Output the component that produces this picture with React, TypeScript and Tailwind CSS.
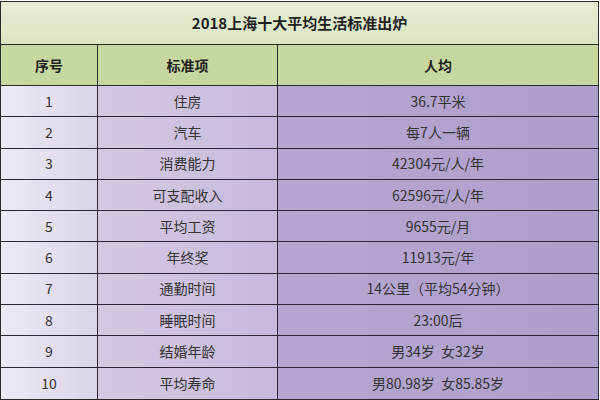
const rows: [string, string, string][] = [
  ['1', '住房', '36.7平米'],
  ['2', '汽车', '每7人一辆'],
  ['3', '消费能力', '42304元/人/年'],
  ['4', '可支配收入', '62596元/人/年'],
  ['5', '平均工资', '9655元/月'],
  ['6', '年终奖', '11913元/年'],
  ['7', '通勤时间', '14公里（平均54分钟）'],
  ['8', '睡眠时间', '23:00后'],
  ['9', '结婚年龄', '男34岁  女32岁'],
  ['10', '平均寿命', '男80.98岁  女85.85岁'],
];

export default function App() {
  return (
    <div className="w-[600px] h-[400px] bg-white pt-px font-['Noto_Sans_CJK_SC','Noto_Sans',sans-serif]">
      <div className="w-[599px] border border-[#2a2a2a] flex flex-col">
        <div className="h-[43px] flex items-center justify-center border-b border-[#2a2a2a] bg-linear-to-b from-[#e6edd4] to-[#dbe5c2] text-[15px] font-bold text-[#1f1f1f]">
          2018上海十大平均生活标准出炉
        </div>
        <div className="h-[41px] grid grid-cols-[97px_180px_1fr] border-b border-[#2a2a2a] bg-[#c6d89f] text-[14px] font-bold text-[#222]">
          <div className="flex items-center justify-center border-r border-[#2a2a2a]">序号</div>
          <div className="flex items-center justify-center border-r border-[#2a2a2a]">标准项</div>
          <div className="flex items-center justify-center">人均</div>
        </div>
        {rows.map(([n, item, value], i) => (
          <div
            key={n}
            className={`h-[31.3px] grid grid-cols-[97px_180px_1fr] text-[14px] text-[#333] ${i < rows.length - 1 ? 'border-b border-[#2b2638]' : ''}`}
          >
            <div className="flex items-center justify-center border-r border-[#2b2638] bg-linear-to-r from-[#edeaf4] to-[#dcd4e9]">{n}</div>
            <div className="flex items-center justify-center border-r border-[#2b2638] bg-linear-to-r from-[#d4c9e4] to-[#c7badc]">{item}</div>
            <div className="flex items-center justify-center bg-linear-to-r from-[#b6a7d2] to-[#ae9ecb] whitespace-pre">{value}</div>
          </div>
        ))}
      </div>
    </div>
  );
}
